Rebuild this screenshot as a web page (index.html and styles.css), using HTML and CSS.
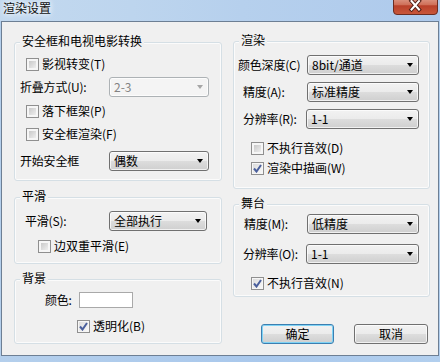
FILE: index.html
```html
<!DOCTYPE html>
<html lang="zh-CN">
<head>
	<meta charset="UTF-8">
	<title>渲染设置</title>
	<link rel="stylesheet" href="styles.css">
</head>
<body>
	<div class="titlebar">
		<span class="title">渲染设置</span>
		<div class="close-btn">
			<svg width="45" height="15" viewBox="0 0 45 15">
				<defs>
					<linearGradient id="red" x1="0" y1="0" x2="0" y2="1">
						<stop offset="0" stop-color="#e0a08f"/>
						<stop offset="0.45" stop-color="#cf6f58"/>
						<stop offset="0.5" stop-color="#b9402a"/>
						<stop offset="1" stop-color="#c9583b"/>
					</linearGradient>
				</defs>
				<path d="M0.5 -3 V11 Q0.5 14.5 4 14.5 H41 Q44.5 14.5 44.5 11 V-3 Z" fill="url(#red)" stroke="#6b2d22"/>
				<path d="M18.5 1 L26 9.5 M26 1 L18.5 9.5" stroke="#4d1d15" stroke-width="4" stroke-linecap="square"/>
				<path d="M18.5 1 L26 9.5 M26 1 L18.5 9.5" stroke="#fff" stroke-width="2" stroke-linecap="square"/>
			</svg>
		</div>
	</div>

	<div class="client">
		<div class="col col-left">
			<div class="group g-safe">
				<div class="group-title">安全框和电视电影转换</div>
				<div class="row r1 in-11"><span class="check"></span><span class="cb-text">影视转变(T)</span></div>
				<div class="row r2 in-5"><span class="lbl w89">折叠方式(U):</span><div class="combo disabled w100"><span>2-3</span><i class="arrow"></i></div></div>
				<div class="row r3 in-11"><span class="check"></span><span class="cb-text">落下框架(P)</span></div>
				<div class="row r4 in-11"><span class="check"></span><span class="cb-text">安全框渲染(F)</span></div>
				<div class="row r5 in-5"><span class="lbl w89">开始安全框</span><div class="combo w100"><span>偶数</span><i class="arrow"></i></div></div>
			</div>

			<div class="group g-smooth">
				<div class="group-title">平滑</div>
				<div class="row s1 in-10"><span class="lbl w84">平滑(S):</span><div class="combo w98"><span>全部执行</span><i class="arrow"></i></div></div>
				<div class="row s2 in-23"><span class="check"></span><span class="cb-text">边双重平滑(E)</span></div>
			</div>

			<div class="group g-bg">
				<div class="group-title">背景</div>
				<div class="row b1 in-30"><span class="lbl w34">颜色:</span><span class="color-box"></span></div>
				<div class="row b2 in-62"><span class="check on"><svg width="9" height="9" viewBox="0 0 9 9"><path d="M1 4.5 L3.5 7.5 L8 1" fill="none" stroke="#4a5f9c" stroke-width="2"/></svg></span><span class="cb-text">透明化(B)</span></div>
			</div>
		</div>

		<div class="col col-right">
			<div class="group g-render">
				<div class="group-title">渲染</div>
				<div class="row q1 in-4"><span class="lbl w69">颜色深度(C)</span><div class="combo w112"><span>8bit/通道</span><i class="arrow"></i></div></div>
				<div class="row q2 in-9"><span class="lbl w64">精度(A):</span><div class="combo w112"><span>标准精度</span><i class="arrow"></i></div></div>
				<div class="row q3 in-9"><span class="lbl w63">分辨率(R):</span><div class="combo w113"><span>1-1</span><i class="arrow"></i></div></div>
				<div class="row q4 in-17"><span class="check"></span><span class="cb-text">不执行音效(D)</span></div>
				<div class="row q5 in-17"><span class="check on"><svg width="9" height="9" viewBox="0 0 9 9"><path d="M1 4.5 L3.5 7.5 L8 1" fill="none" stroke="#4a5f9c" stroke-width="2"/></svg></span><span class="cb-text">渲染中描画(W)</span></div>
			</div>

			<div class="group g-stage">
				<div class="group-title">舞台</div>
				<div class="row t1 in-10"><span class="lbl w63">精度(M):</span><div class="combo w112"><span>低精度</span><i class="arrow"></i></div></div>
				<div class="row t2 in-9"><span class="lbl w63">分辨率(O):</span><div class="combo w113"><span>1-1</span><i class="arrow"></i></div></div>
				<div class="row t3 in-17"><span class="check on"><svg width="9" height="9" viewBox="0 0 9 9"><path d="M1 4.5 L3.5 7.5 L8 1" fill="none" stroke="#4a5f9c" stroke-width="2"/></svg></span><span class="cb-text">不执行音效(N)</span></div>
			</div>

			<div class="buttons">
				<button class="btn btn-default">确定</button>
				<button class="btn btn-cancel">取消</button>
			</div>
		</div>
	</div>
	<div class="frame-bottom"></div>
</body>
</html>
```

FILE: styles.css
```css
html, body {
	margin: 0;
	padding: 0;
}

body {
	width: 440px;
	height: 362px;
	overflow: hidden;
	font-family: "Noto Sans CJK SC", "DejaVu Sans", sans-serif;
	font-size: 12px;
	color: #000;
	background: linear-gradient(to right, #b4cfec, #a9c8ec 60%, #b2cfee);
}

/* glass title bar */
.titlebar {
	height: 21px;
	display: flex;
	justify-content: space-between;
	align-items: flex-start;
	background: linear-gradient(to right, #c3d9ef 0%, #bdd5ee 30%, #b6d0ed 55%, #aecaec 100%);
}

.title {
	margin: 1px 0 0 0;
	line-height: 14px;
	padding: 0 3px;
	color: #111;
	text-shadow: 0 0 5px #fff, 0 0 7px #fff;
}

.close-btn {
	width: 45px;
	height: 15px;
	margin-right: 2px;
}

.close-btn svg {
	display: block;
}

/* client area */
.client {
	box-sizing: border-box;
	width: 438px;
	height: 335px;
	margin-left: 1px;
	border: 1px solid #6d7f94;
	background: #f0f0f0;
	display: flex;
	align-items: flex-start;
}

.frame-bottom {
	height: 6px;
}

.col {
	display: flex;
	flex-direction: column;
}

.col-left {
	width: 208px;
	margin-left: 12px;
}

.col-right {
	width: 197px;
	margin-left: 11px;
}

/* group boxes */
.group {
	box-sizing: border-box;
	border: 1px solid #d5dfe5;
	border-radius: 3px;
	box-shadow: inset 0 0 0 1px #fbfbfb;
}

.group-title {
	display: table;
	height: 14px;
	line-height: 14px;
	margin: -9px 0 0 5px;
	padding: 0 2px;
	background: #f0f0f0;
}

.g-safe { margin-top: 20px; height: 139px; }
.g-smooth { margin-top: 16px; height: 67px; }
.g-bg { margin-top: 15px; height: 65px; }
.g-render { margin-top: 19px; height: 148px; }
.g-stage { margin-top: 15px; height: 93px; }

/* rows */
.row {
	display: flex;
	align-items: center;
	height: 20px;
	white-space: nowrap;
}

.r1 { margin-top: 6px; }
.r2 { margin-top: 3px; }
.r3 { margin-top: 4px; }
.r4 { margin-top: 3px; }
.r5 { margin-top: 7px; }

.s1 { margin-top: 8px; }
.s2 { margin-top: 5px; }

.b1 { margin-top: 5px; }
.b2 { margin-top: 6px; }

.q1 { margin-top: 8px; }
.q2 { margin-top: 7px; }
.q3 { margin-top: 7px; }
.q4 { margin-top: 9px; }
.q5 { margin-top: 0; }

.t1 { margin-top: 4px; }
.t2 { margin-top: 10px; }
.t3 { margin-top: 9px; }

.in-4 { padding-left: 4px; }
.in-5 { padding-left: 5px; }
.in-9 { padding-left: 9px; }
.in-10 { padding-left: 10px; }
.in-11 { padding-left: 11px; }
.in-17 { padding-left: 17px; }
.in-23 { padding-left: 23px; }
.in-30 { padding-left: 30px; }
.in-62 { padding-left: 62px; }

.lbl {
	flex: none;
	line-height: 14px;
	letter-spacing: -0.2px;
}

.w34 { width: 34px; }
.w63 { width: 63px; }
.w64 { width: 64px; }
.w69 { width: 69px; }
.w84 { width: 84px; }
.w89 { width: 89px; }

/* checkbox */
.check {
	flex: none;
	box-sizing: border-box;
	width: 13px;
	height: 13px;
	padding: 2px;
	border: 1px solid #8f8f8f;
	background: linear-gradient(135deg, #c9c9c9, #eeeeee) content-box, linear-gradient(#f6f6f6, #f6f6f6);
	display: flex;
	align-items: center;
	justify-content: center;
}

.check.on {
	padding: 1px;
	background: linear-gradient(135deg, #dcdcdc, #f8f8f8) content-box, linear-gradient(#f6f6f6, #f6f6f6);
}

.check svg {
	display: block;
}

.cb-text {
	margin-left: 3px;
	line-height: 14px;
}

/* dropdowns */
.combo {
	box-sizing: border-box;
	height: 20px;
	display: flex;
	align-items: center;
	padding-left: 4px;
	border: 1px solid #707070;
	border-radius: 3px;
	background: linear-gradient(#f2f2f2 0%, #ebebeb 50%, #dddddd 50%, #cfcfcf 100%);
	box-shadow: inset 0 0 0 1px rgba(255, 255, 255, 0.7);
}

.combo span {
	line-height: 14px;
}

.combo .arrow {
	margin-left: auto;
	margin-right: 5px;
	width: 0;
	height: 0;
	border-left: 3.5px solid transparent;
	border-right: 3.5px solid transparent;
	border-top: 4px solid #000;
}

.combo.disabled {
	border-color: #adb2b5;
	background: #f4f4f4;
	color: #838383;
}

.combo.disabled .arrow {
	border-top-color: #a6a6a6;
}

.w98 { width: 98px; }
.w100 { width: 100px; }
.w112 { width: 112px; }
.w113 { width: 113px; }

.color-box {
	box-sizing: border-box;
	width: 54px;
	height: 16px;
	border: 1px solid #a9a9a9;
	background: #fff;
}

/* buttons */
.buttons {
	display: flex;
	gap: 20px;
	margin-top: 27px;
	padding-left: 28px;
}

.btn {
	box-sizing: border-box;
	height: 20px;
	padding: 0;
	font-family: inherit;
	font-size: 12px;
	line-height: 14px;
	color: #000;
	border: 1px solid #707070;
	border-radius: 3px;
	background: linear-gradient(#f2f2f2 0%, #ebebeb 50%, #dddddd 50%, #cfcfcf 100%);
	box-shadow: inset 0 0 0 1px rgba(255, 255, 255, 0.7);
}

.btn-default {
	width: 73px;
	border-color: #3c7fb1;
	box-shadow: inset 0 0 0 1px #7fd3f5;
}

.btn-cancel {
	width: 74px;
}
```
